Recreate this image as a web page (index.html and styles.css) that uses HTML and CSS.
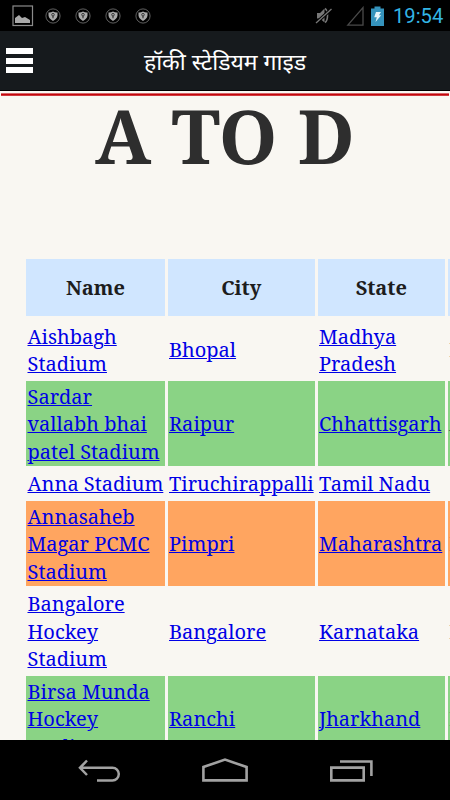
FILE: index.html
```
<!DOCTYPE html>
<html lang="hi">
<head>
    <meta charset="UTF-8">
    <meta name="viewport" content="width=device-width, initial-scale=1.0">
    <title>हॉकी स्टेडियम गाइड</title>
    <link rel="stylesheet" href="styles.css">
</head>
<body>
    <svg class="defs" width="0" height="0">
        <symbol id="shield" viewBox="0 0 16 16">
            <circle cx="8" cy="8" r="7.1" fill="none" stroke="#777" stroke-width="0.8"/>
            <path d="M3.5 4.4Q6 4.6 8 3.4Q10 4.6 12.5 4.4V7.5Q12 11 8 12.9Q4 11 3.5 7.5Z" fill="#aaa"/>
            <circle cx="8" cy="6.7" r="1.3" fill="#aaa" stroke="#222" stroke-width="0.8"/>
            <path d="M8 8V10.3" stroke="#222" stroke-width="1"/>
        </symbol>
    </svg>

    <div class="status-bar">
        <svg class="picture" width="22" height="22" viewBox="0 0 22 22">
            <rect x="1" y="1" width="19.5" height="19.5" fill="none" stroke="#8b8b8b" stroke-width="1.2"/>
            <path d="M3 18V13L7 10L10 13L13 12L18 15V18Z" fill="#aaa"/>
        </svg>
        <svg class="shield" width="16" height="16"><use href="#shield"/></svg>
        <svg class="shield" width="16" height="16"><use href="#shield"/></svg>
        <svg class="shield" width="16" height="16"><use href="#shield"/></svg>
        <svg class="shield" width="16" height="16"><use href="#shield"/></svg>
        <div class="status-right">
            <svg width="18" height="20" viewBox="0 0 18 20">
                <path d="M2 7H5L9.5 2.5V16.5L5 12.5H2Z" fill="#777"/>
                <path d="M10 2.5Q12.5 4 12.5 9.5T10 16.5" fill="none" stroke="#777" stroke-width="1.6"/>
                <path d="M1 17L16.5 3" stroke="#000" stroke-width="3.2"/>
                <path d="M1 17L16.5 3" stroke="#777" stroke-width="1.3"/>
            </svg>
            <svg width="18" height="20" viewBox="0 0 18 20">
                <path d="M1.8 19.2L17 1.6V19.2Z" fill="none" stroke="#4a4a4a" stroke-width="1.3"/>
            </svg>
            <svg width="13" height="20" viewBox="0 0 13 20">
                <path d="M0 2.5H3.5V0.5H9.5V2.5H13V20H0Z" fill="#3593bc"/>
                <path d="M5 6H10L8 9.3H10.2L4.5 16L5.8 11.2H3.2Z" fill="#e6f5fb"/>
            </svg>
            <span class="clock">19:54</span>
        </div>
    </div>

    <header class="app-bar">
        <div class="menu"><i></i><i></i><i></i></div>
        <h2 class="app-title">हॉकी स्टेडियम गाइड</h2>
    </header>

    <main class="page">
        <hr class="rule">
        <h1 class="heading">A TO D</h1>
        <div class="stadiums">
            <div class="row head"><div><b>Name</b></div><div><b>City</b></div><div><b>State</b></div><div></div></div>
            <div class="row short"><div><a href="#">Aishbagh<br>Stadium</a></div><div><a href="#">Bhopal</a></div><div><a href="#">Madhya<br>Pradesh</a></div><div class="more">N</div></div>
            <div class="row green"><div><a href="#">Sardar<br>vallabh bhai<br>patel Stadium</a></div><div><a href="#">Raipur</a></div><div><a href="#">Chhattisgarh</a></div><div class="more">A</div></div>
            <div class="row single"><div><a href="#">Anna Stadium</a></div><div><a href="#">Tiruchirappalli</a></div><div><a href="#">Tamil Nadu</a></div><div></div></div>
            <div class="row orange"><div><a href="#">Annasaheb<br>Magar PCMC<br>Stadium</a></div><div><a href="#">Pimpri</a></div><div><a href="#">Maharashtra</a></div><div class="more">N</div></div>
            <div class="row"><div><a href="#">Bangalore<br>Hockey<br>Stadium</a></div><div><a href="#">Bangalore</a></div><div><a href="#">Karnataka</a></div><div class="more">N</div></div>
            <div class="row green"><div><a href="#">Birsa Munda<br>Hockey<br>Stadium</a></div><div><a href="#">Ranchi</a></div><div><a href="#">Jharkhand</a></div><div class="more">N</div></div>
        </div>
    </main>

    <nav class="nav-bar">
        <svg width="44" height="26" viewBox="0 0 44 26" fill="none" stroke="#a2a2a2" stroke-width="2.5">
            <path d="M10 2.5L3 9.8L10 17M3 9.8H35.5A6.3 6.3 0 0 1 35.5 22.4H20"/>
        </svg>
        <svg width="48" height="26" viewBox="0 0 48 26" fill="none" stroke="#a2a2a2" stroke-width="2.6">
            <path d="M2.4 22.4V9L24 1.6L45.6 9V22.4Z"/>
        </svg>
        <svg width="46" height="26" viewBox="0 0 46 26" fill="none" stroke="#a2a2a2" stroke-width="2.6">
            <path d="M3.3 9.6H35.7V22.4H3.3Z"/>
            <path d="M12 3.5H43.4V18"/>
        </svg>
    </nav>
</body>
</html>
```
FILE: styles.css
```
* {
    box-sizing: border-box;
}

body {
    margin: 0;
    height: 800px;
    overflow: hidden;
    display: flex;
    flex-direction: column;
    background: #f9f7f2;
    font-family: 'Noto Serif', 'Droid Serif', 'DejaVu Serif Condensed', 'DejaVu Serif', serif;
}

svg {
    display: block;
    flex: none;
}

.defs {
    position: absolute;
}

.status-bar {
    height: 31px;
    flex: none;
    display: flex;
    align-items: center;
    background: #000;
    padding: 0 7px 0 12px;
}

.picture {
    margin-right: 3px;
}

.shield {
    margin-left: 14px;
}

.picture + .shield {
    margin-left: 8px;
}

.status-right {
    margin-left: auto;
    display: flex;
    align-items: center;
}

.status-right svg:nth-child(2) {
    margin: 0 7px 0 13px;
}

.clock {
    width: 50px;
    margin-left: 9px;
    padding-top: 2px;
    color: #33b5e5;
    font: 20.2px/31px Roboto, sans-serif;
    white-space: nowrap;
}

.app-bar {
    height: 60px;
    flex: none;
    display: grid;
    grid-template-columns: 50px 1fr 50px;
    align-items: center;
    background: #161a1d;
    border-bottom: 1px solid #000;
}

.menu {
    display: grid;
    gap: 3.5px;
    padding-left: 5.5px;
}

.menu i {
    width: 27.5px;
    height: 6px;
    background: #fff;
}

.app-title {
    margin: 0;
    color: #fff;
    font: 23px/40px 'Noto Sans', 'Noto Sans Devanagari', sans-serif;
    text-align: center;
    white-space: nowrap;
}

.page {
    height: 649px;
    flex: none;
    overflow: hidden;
}

.rule {
    height: 3px;
    margin: 2px 1px 0;
    border: 0;
    border-top: 1px solid #d86468;
    border-bottom: 1px solid #cf3a3e;
    background: #c4070b;
}

.heading {
    height: 162.5px;
    margin: 0;
    padding-top: 1px;
    color: #2e2e2e;
    font-size: 74.5px;
    line-height: 76px;
    word-spacing: 1px;
    text-align: center;
    white-space: nowrap;
}

.stadiums {
    width: 470px;
    padding-left: 26px;
    display: grid;
    gap: 2.5px;
    color: #0000e6;
    font-size: 20px;
    line-height: 27.5px;
}

.row {
    height: 85px;
    display: grid;
    grid-template-columns: 139px 147.5px 127.5px 1fr;
    gap: 2.5px;
}

.row > div {
    display: flex;
    align-items: center;
    padding: 1px 0 0 1.5px;
    white-space: nowrap;
}

.row a {
    color: #0000e6;
    text-decoration-thickness: 1px;
}

.head {
    height: 57.5px;
    color: #1d1d1d;
}

.head > div {
    justify-content: center;
    padding: 0;
    background: #d0e6ff;
}

.short {
    height: 60px;
}

.short > div {
    padding-top: 3px;
}

.single {
    height: 30px;
}

.single > div {
    padding-top: 0;
}

.green > div {
    background: #8ad385;
}

.orange > div {
    background: #ffa560;
}

.row .more {
    color: #555;
}

.nav-bar {
    height: 60px;
    flex: none;
    display: flex;
    align-items: center;
    justify-content: space-between;
    padding: 2px 76px 0 77px;
    background: #000;
}
```
